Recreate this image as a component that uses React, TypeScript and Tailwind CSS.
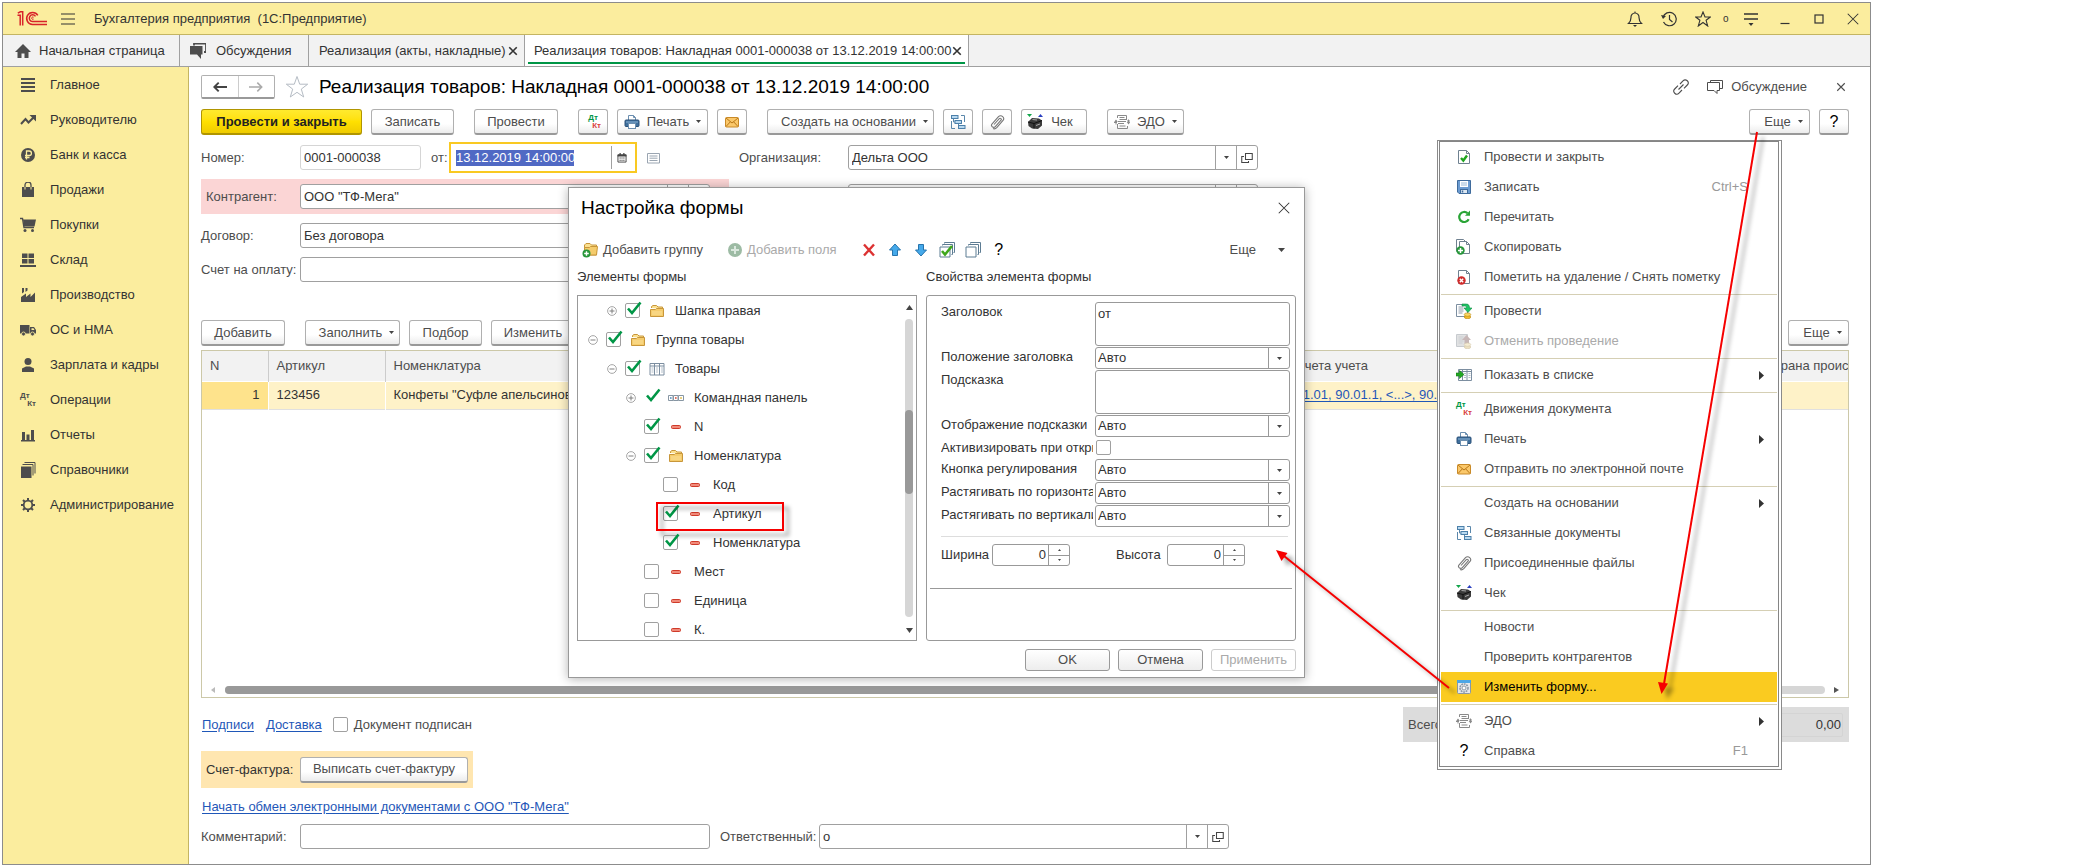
import type { ReactNode } from 'react';
import clsx from 'clsx';

interface IconProps {
  children: ReactNode;
  className?: string;
}

function Icon({ children, className = 'size-4' }: IconProps) {
  return (
    <svg className={clsx('shrink-0', className)} viewBox="0 0 16 16" fill="none" aria-hidden="true">
      {children}
    </svg>
  );
}

function Caret({ className = 'h-[3px] w-[5px]' }: { className?: string }) {
  return (
    <svg className={clsx('shrink-0', className)} viewBox="0 0 5 3" preserveAspectRatio="none" fill="#444" aria-hidden="true">
      <path d="M0 0h5L2.5 3z" />
    </svg>
  );
}

function Logo() {
  return (
    <svg className="h-[15px] w-[30px] shrink-0" viewBox="0 0 30 15" fill="none" stroke="#d8232a" strokeWidth="1.5" aria-hidden="true">
      <path d="M.5 4.2h2.7v10.3M.8 2.2l2.6-1.4h2.3v13.7" />
      <path d="M20.8 4.4A6 6 0 1 0 15.5 13.5H30" />
      <path d="M18.5 5.3A3.4 3.4 0 1 0 15.5 10.6H30" />
      <path d="M16.6 6.2a1.2 1.2 0 1 0 0 1.9" strokeWidth="1" />
    </svg>
  );
}

function DtKt({ mono }: { mono?: boolean }) {
  return (
    <span className="flex h-4 w-4 shrink-0 flex-col justify-center text-[8px] leading-[8px] font-bold">
      <span className={mono ? 'text-[#4d4d4d]' : 'text-[#009646]'}>Дт</span>
      <span className={clsx('self-end', mono ? 'text-[#4d4d4d]' : 'text-[#d9413d]')}>Кт</span>
    </span>
  );
}

const PrinterIcon = () => (
  <Icon>
    <path d="M4.500 6V1.500h5l2 2V6" fill="#fff" stroke="#6c8fb0" />
    <path d="M9.500 1.500v2h2" stroke="#6c8fb0" />
    <rect x="1" y="6" width="14" height="6.500" rx="1" fill="#3f6f9c" stroke="#2b5179" />
    <path d="M2 8h12" stroke="#8db4d6" />
    <rect x="4.500" y="9.500" width="7" height="5" fill="#fff" stroke="#6c8fb0" />
  </Icon>
);

const MailIcon = () => (
  <Icon>
    <rect x="1.500" y="3.500" width="13" height="9.500" rx="1" fill="#fbc86a" stroke="#c98a28" />
    <path d="M2 4l6 5 6-5M2 12.500l4.300-4.600M14 12.500L9.700 7.900" stroke="#b87718" />
  </Icon>
);

const StructureIcon = () => (
  <Icon>
    <path d="M1.500 7v7.500H5M11 1.500h3.500V8" stroke="#5a87ab" />
    <path d="M3.500 5v3H6M8.500 10v3H11" stroke="#5a87ab" />
    <rect x="1.500" y="1.500" width="6.500" height="3" fill="#b9d9f0" stroke="#4c80aa" />
    <rect x="5" y="6.500" width="6.500" height="3" fill="#b9d9f0" stroke="#4c80aa" />
    <rect x="8.500" y="11.500" width="6.500" height="3" fill="#b9d9f0" stroke="#4c80aa" />
  </Icon>
);

const ClipIcon = () => (
  <Icon>
    <path
      d="M5 10.500l5.300-5.800a1.100 1.100 0 0 1 1.700 1.500L6.300 12.600a2.100 2.100 0 0 1-3.200-2.800L9.500 2.700a2.900 2.900 0 0 1 4.300 4L8 13.400c-1.200 1.300-2.600 1.700-4 1.200"
      stroke="#777"
      strokeWidth="1.100"
    />
  </Icon>
);

const RegisterIcon = () => (
  <Icon>
    <path d="M0 0h5L2.500 3z" fill="#12a54a" />
    <path d="M11 3h5l-2.500-3z" fill="#2a3fc0" />
    <path d="M1 8l4-4 7 .5 3 2v5L11 15l-6-.5L1.500 12z" fill="#3b3b3b" />
    <path d="M1 8l6 1.500v5M7 9.500l8-3" stroke="#111" />
    <path d="M5.500 5.500l4.500.5M9 11.500l4-1.500" stroke="#aaa" />
  </Icon>
);

const EdoIcon = () => (
  <Icon>
    <path d="M3.500 4V1.500h9V6M3.500 10v4.500h10V12" stroke="#8a8a8a" />
    <path d="M5.500 3.500h5M5.500 5.500h7M4 7.500h8M4 9.500h6M5.500 12h6" stroke="#8a8a8a" />
    <path d="M0 8.500h3M13 7h3M2 6.500v4M14.500 5.500v3" stroke="#8a8a8a" />
    <path d="M2 5.500L.2 8h3.600zM14.500 10.500L12.700 8h3.600z" fill="#8a8a8a" />
  </Icon>
);

const PageShape = () => (
  <>
    <path d="M2.500 1.500h8l3 3v10h-11z" fill="#fff" stroke="#6f8190" />
    <path d="M10.500 1.500v3h3" stroke="#6f8190" />
  </>
);

const DocCheckIcon = () => (
  <Icon>
    <PageShape />
    <path d="M5 9l2.300 2.500L11 6.500" stroke="#1fa51f" strokeWidth="2.400" />
  </Icon>
);

const FloppyIcon = () => (
  <Icon>
    <path d="M1.500 1.500h13v13H3l-1.500-1.500z" fill="#6b9bd1" stroke="#3f6b9c" />
    <rect x="4" y="2" width="8" height="6" fill="#fff" />
    <path d="M5 4h6M5 6h6" stroke="#9ab8d6" />
    <rect x="4.500" y="10.500" width="7" height="4" fill="#dde8f2" stroke="#3f6b9c" />
    <path d="M6.500 11.500v2" stroke="#3f6b9c" strokeWidth="1.500" />
  </Icon>
);

const ReloadIcon = () => (
  <Icon>
    <path d="M11.500 4.200a5 5 0 1 0 1.200 6" stroke="#2aa436" strokeWidth="2.200" />
    <path d="M9 6.800h5V1.500z" fill="#2aa436" />
  </Icon>
);

const CopyIcon = () => (
  <Icon>
    <path d="M.5.5h7l2 2M.5.500V12.500" stroke="#6f8190" />
    <path d="M3.500 2.500h7l3 3v9h-10z" fill="#fff" stroke="#6f8190" />
    <path d="M10.500 2.500v3h3" stroke="#6f8190" />
    <circle cx="4.500" cy="11.500" r="4.200" fill="#27963a" />
    <path d="M4.500 9v5M2 11.500h5" stroke="#fff" strokeWidth="1.500" />
  </Icon>
);

const MarkDeleteIcon = () => (
  <Icon>
    <PageShape />
    <circle cx="5.500" cy="11.500" r="4.200" fill="#cf2b2b" />
    <path d="M3.800 9.800l3.400 3.400M7.200 9.800l-3.400 3.400" stroke="#fff" strokeWidth="1.400" />
  </Icon>
);

const PostIcon = ({ faded }: { faded?: boolean }) => (
  <Icon className={faded ? 'size-4 opacity-45 grayscale-50' : 'size-4'}>
    <path d="M.5 1.500h11v12H.5z" fill={faded ? '#b9bdc2' : '#fff'} stroke="#7c8ea0" />
    <path d="M2.500 4h5M2.500 6h5M2.500 8h5M2.500 10h4" stroke="#8b99a8" />
    {faded ? (
      <path d="M6 7l4.500-5L15 7h-2v4H8.500V7z" fill="#a05a5a" />
    ) : (
      <path d="M6 1h4c3 0 3.500 2 3.500 4H16l-4 4.500L8 5h2.500c0-1.500-.5-2-2-2H6z" fill="#1fc466" stroke="#128a44" strokeWidth=".6" />
    )}
    <ellipse cx="11.500" cy="14" rx="3.300" ry="1.700" fill="#f3bd2c" stroke="#b98410" strokeWidth=".6" />
    <ellipse cx="11.500" cy="11.600" rx="3.300" ry="1.700" fill="#fbd763" stroke="#b98410" strokeWidth=".6" />
  </Icon>
);

const ShowListIcon = () => (
  <Icon>
    <path d="M2.500 2.500h13v11h-13zM6.500 2.500v11M11 2.500v11M2.500 4.500h13" fill="#fff" stroke="#7c8ea0" />
    <path d="M8 6.500h2M8 8.500h2M8 10.500h2M12.500 6.500h2M12.500 8.500h2M12.500 10.500h2" stroke="#b3bec9" />
    <path d="M0 6h3.500V3.500L8 7.500 3.500 11.500V9H0z" fill="#22a822" stroke="#157915" strokeWidth=".6" />
  </Icon>
);

const EditFormIcon = () => (
  <Icon>
    <rect x="1.500" y="1.500" width="13" height="13" rx="1" fill="#e6e9ec" stroke="#8b98a5" />
    <rect x="1" y="1" width="14" height="3" fill="#4ba6e6" />
    <circle cx="8" cy="9" r="4" stroke="#8b98a5" strokeWidth="1.600" strokeDasharray="1.800 .8" />
    <circle cx="8" cy="9" r="2" fill="#fff" stroke="#8b98a5" />
  </Icon>
);

const FolderIcon = () => (
  <Icon>
    <path d="M2.500 5V3.500L4 2.500h3.500L9 4h4.500v2" fill="#fbe08f" stroke="#c8963a" />
    <path d="M1.500 6.500h5l1-1h7v8h-13z" fill="#f5cc6c" stroke="#c8963a" />
    <path d="M3 9h10M3 11h10" stroke="#fbdf98" />
  </Icon>
);

const ColumnsIcon = () => (
  <Icon>
    <path d="M1 2.500h14v11.500H1zM5.500 2.500v11.500M10.500 2.500v11.500M1 5h14" fill="#fff" stroke="#7c8ea0" />
    <path d="M2.500 7h2M2.500 9h2M2.500 11h2M7 7h2M7 9h2M7 11h2M12 7h2M12 9h2M12 11h2" stroke="#b3bec9" />
  </Icon>
);

const PanelIcon = () => (
  <Icon>
    <path d="M.5 5.500h4.500v5H.5zM5.500 5.500h4.500v5H5.500zM10.500 5.500H15.500v5h-5z" fill="#fff" stroke="#8796a3" />
    <path d="M2 7.200h1.600v1.600H2z" fill="#4a86b8" />
    <path d="M7 7.200h1.600v1.600H7z" fill="#d8452f" />
    <path d="M12.200 7.200h1.600v1.600h-1.600z" fill="#d8b02f" />
  </Icon>
);

const MinusIcon = () => (
  <Icon>
    <rect x="3.500" y="6.500" width="9" height="3" rx="1" fill="#f08a7a" stroke="#cf3a2a" />
  </Icon>
);

const ChatIcon = () => (
  <Icon>
    <path d="M3.500 3V1.500h12v8h-2.500" stroke="#4d4d4d" />
    <path d="M.5 3.500h12v8H10V14.500L7 11.500H.5z" stroke="#4d4d4d" />
  </Icon>
);

const OpenIcon = () => (
  <Icon className="size-3">
    <path d="M6 2h9v8H6zM4 6H1v8h9v-2" stroke="#444" strokeWidth="1.400" />
  </Icon>
);

const CloseIcon = ({ className, weight = 1.2 }: { className?: string; weight?: number }) => (
  <Icon className={className}>
    <path d="M2 2l12 12M14 2L2 14" stroke="currentColor" strokeWidth={weight} />
  </Icon>
);

interface SideItem {
  label: string;
  icon: ReactNode;
}

const dark = '#4d4d4d';

const sections: SideItem[] = [
  { label: 'Главное', icon: <Icon><path d="M1 2h14M1 6h14M1 10h14M1 14h14" stroke={dark} strokeWidth="2" /></Icon> },
  { label: 'Руководителю', icon: <Icon><path d="M1 12l4.500-5 3 3.500L14 5" stroke={dark} strokeWidth="2" /><path d="M9.500 3H16v6.500z" fill={dark} /></Icon> },
  { label: 'Банк и касса', icon: <Icon><circle cx="8" cy="8" r="7" fill={dark} /><path d="M6.500 12.500V4h2.700a2.200 2.200 0 0 1 0 4.500H5M5 10.500h4.500" stroke="#fbed9e" strokeWidth="1.300" /></Icon> },
  { label: 'Продажи', icon: <Icon><path d="M2 5h12v10H2z" fill={dark} /><path d="M5 7V3a3 3 0 0 1 6 0v4" stroke={dark} strokeWidth="1.300" /><path d="M5 5v2.500M11 5v2.500" stroke="#fbed9e" /></Icon> },
  { label: 'Покупки', icon: <Icon><path d="M0 1.500h2.500l1.500 9h10" stroke={dark} strokeWidth="1.400" /><path d="M3 2.500h13l-1.500 7H4z" fill={dark} /><circle cx="5" cy="13.500" r="1.500" fill={dark} /><circle cx="12.500" cy="13.500" r="1.500" fill={dark} /></Icon> },
  { label: 'Склад', icon: <Icon><path d="M2 1.500h5.500V6H2zM8.500 1.500H14V6H8.500zM2 7h5.500v4.500H2zM8.500 7H14v4.500H8.500zM0 13h16v2H0z" fill={dark} /></Icon> },
  { label: 'Производство', icon: <Icon><path d="M1 15V10L6 6.500V10l4.500-3.500V10L15 5.500V15zM2 1h2v4l-2 1.500zM5.500 1h2v2.500l-2 1.500z" fill={dark} /></Icon> },
  { label: 'ОС и НМА', icon: <Icon><path d="M0 3h9.500v8.500H0zM10 5h4l2 3v3.500h-6z" fill={dark} /><circle cx="3.500" cy="12" r="2" fill={dark} stroke="#fbed9e" strokeWidth=".8" /><circle cx="12.500" cy="12" r="2" fill={dark} stroke="#fbed9e" strokeWidth=".8" /><path d="M11.500 6.200h2l1 1.800h-3z" fill="#fbed9e" /></Icon> },
  { label: 'Зарплата и кадры', icon: <Icon><circle cx="8" cy="4.500" r="3.500" fill={dark} /><path d="M2 15v-3.500L6 9.500h4l4 2V15z" fill={dark} /></Icon> },
  { label: 'Операции', icon: <DtKt mono /> },
  { label: 'Отчеты', icon: <Icon><path d="M2 5h3v8H2zM6.500 7.500h3V13h-3zM11 3h3v10h-3zM1 13h14v1.500H1z" fill={dark} /></Icon> },
  { label: 'Справочники', icon: <Icon><path d="M1 4.500h10.500V16H1z" fill={dark} /><path d="M2.500 2.500H13v11M4.500.500H15v11" stroke={dark} /></Icon> },
  { label: 'Администрирование', icon: <Icon><circle cx="8" cy="8" r="4.300" stroke={dark} strokeWidth="1.800" /><path d="M8 1v3M8 12v3M1 8h3M12 8h3M3 3l2 2M11 11l2 2M3 13l2-2M11 5l2-2" stroke={dark} strokeWidth="2" /></Icon> },
];

interface MenuEntry {
  label: string;
  icon?: ReactNode;
  hint?: string;
  submenu?: boolean;
  disabled?: boolean;
  active?: boolean;
}

const menuGroups: MenuEntry[][] = [
  [
    { label: 'Провести и закрыть', icon: <DocCheckIcon /> },
    { label: 'Записать', icon: <FloppyIcon />, hint: 'Ctrl+S' },
    { label: 'Перечитать', icon: <ReloadIcon /> },
    { label: 'Скопировать', icon: <CopyIcon /> },
    { label: 'Пометить на удаление / Снять пометку', icon: <MarkDeleteIcon /> },
  ],
  [
    { label: 'Провести', icon: <PostIcon /> },
    { label: 'Отменить проведение', icon: <PostIcon faded />, disabled: true },
  ],
  [{ label: 'Показать в списке', icon: <ShowListIcon />, submenu: true }],
  [
    { label: 'Движения документа', icon: <DtKt /> },
    { label: 'Печать', icon: <PrinterIcon />, submenu: true },
    { label: 'Отправить по электронной почте', icon: <MailIcon /> },
  ],
  [
    { label: 'Создать на основании', submenu: true },
    { label: 'Связанные документы', icon: <StructureIcon /> },
    { label: 'Присоединенные файлы', icon: <ClipIcon /> },
    { label: 'Чек', icon: <RegisterIcon /> },
  ],
  [
    { label: 'Новости' },
    { label: 'Проверить контрагентов' },
    { label: 'Изменить форму...', icon: <EditFormIcon />, active: true },
  ],
  [
    { label: 'ЭДО', icon: <EdoIcon />, submenu: true },
    { label: 'Справка', icon: <span className="w-4 text-center text-base text-black">?</span>, hint: 'F1' },
  ],
];

interface TreeRow {
  label: string;
  level: number;
  icon: ReactNode;
  checked?: boolean;
  plain?: boolean;
  expander?: 'plus' | 'minus';
  marked?: boolean;
}

const tree: TreeRow[] = [
  { label: 'Шапка правая', level: 1, icon: <FolderIcon />, checked: true, expander: 'plus' },
  { label: 'Группа товары', level: 0, icon: <FolderIcon />, checked: true, expander: 'minus' },
  { label: 'Товары', level: 1, icon: <ColumnsIcon />, checked: true, expander: 'minus' },
  { label: 'Командная панель', level: 2, icon: <PanelIcon />, checked: true, plain: true, expander: 'plus' },
  { label: 'N', level: 2, icon: <MinusIcon />, checked: true },
  { label: 'Номенклатура', level: 2, icon: <FolderIcon />, checked: true, expander: 'minus' },
  { label: 'Код', level: 3, icon: <MinusIcon /> },
  { label: 'Артикул', level: 3, icon: <MinusIcon />, checked: true, marked: true },
  { label: 'Номенклатура', level: 3, icon: <MinusIcon />, checked: true },
  { label: 'Мест', level: 2, icon: <MinusIcon /> },
  { label: 'Единица', level: 2, icon: <MinusIcon /> },
  { label: 'К.', level: 2, icon: <MinusIcon /> },
];

const levelPadding = ['pl-[10px]', 'pl-[29px]', 'pl-12', 'pl-[67px]'];

interface ToolButtonProps {
  children: ReactNode;
  className?: string;
  label?: string;
}

function ToolButton({ children, className, label }: ToolButtonProps) {
  return (
    <button
      type="button"
      aria-label={label}
      className={clsx(
        'flex h-[26px] shrink-0 items-center justify-center rounded-[3px] border border-[#b0b0b0] border-b-2 border-b-[#999] bg-linear-to-b from-white from-60% to-[#ececec] text-[#4d4d4d]',
        className,
      )}
    >
      {children}
    </button>
  );
}

interface FieldProps {
  id: string;
  value?: string;
  pickers?: boolean;
  className?: string;
}

function Field({ id, value = '', pickers, className }: FieldProps) {
  return (
    <div className={clsx('flex h-[25px] shrink-0 rounded-[3px] border border-[#a0a0a0] bg-white', className)}>
      <input id={id} defaultValue={value} className="min-w-0 flex-1 bg-transparent px-[3px] text-[#333] outline-none" />
      {pickers && (
        <>
          <button type="button" aria-label="Выбрать" className="flex w-[21px] items-center justify-center border-l border-[#a0a0a0]">
            <Caret />
          </button>
          <button type="button" aria-label="Открыть" className="flex w-[21px] items-center justify-center border-l border-[#a0a0a0]">
            <OpenIcon />
          </button>
        </>
      )}
    </div>
  );
}

function CheckMark() {
  return (
    <svg className="pointer-events-none absolute -top-[2px] left-[2px] h-4 w-[15px]" viewBox="0 0 15 16" fill="none" aria-hidden="true">
      <path d="M1 7.500l4 4.500L13.500 1.500" stroke="#009646" strokeWidth="2.600" />
    </svg>
  );
}

function TitleBar() {
  return (
    <header className="flex h-8 shrink-0 items-center border-b border-[#c4b562] bg-[#fbed9e] pl-[14px] text-[#333]">
      <Logo />
      <button type="button" aria-label="Меню" className="ml-[13px]">
        <Icon><path d="M1 3h14M1 8h14M1 13h14" stroke="#333" strokeWidth="1.200" /></Icon>
      </button>
      <h1 className="ml-[18px] flex-1 whitespace-pre">Бухгалтерия предприятия  (1С:Предприятие)</h1>
      <div className="flex items-center pr-[9px]">
        <button type="button" aria-label="Уведомления">
          <Icon><path d="M1.500 12.500h13c-2-2-2.500-3-2.500-6A4 4 0 0 0 8 2a4 4 0 0 0-4 4.500c0 3-.5 4-2.500 6z" stroke="#333" strokeWidth="1.200" /><path d="M8 .5V2" stroke="#333" /><path d="M6 14h4l-2 2z" fill="#333" /></Icon>
        </button>
        <button type="button" aria-label="История" className="ml-[18px]">
          <Icon><path d="M2 6.500a6.700 6.700 0 1 1 .5 4.500M8.500 4v4.500l3 2.500" stroke="#333" strokeWidth="1.200" /><path d="M0 4l2 4 3-3z" fill="#333" /></Icon>
        </button>
        <button type="button" aria-label="Избранное" className="ml-[18px]">
          <Icon><path d="M8 1l2 5h5.300l-4.200 3.300L12.700 15 8 11.500 3.300 15l1.600-5.700L.7 6H6z" stroke="#333" strokeWidth="1.100" /></Icon>
        </button>
        <span className="ml-3 w-2 text-[10px]">o</span>
        <button type="button" aria-label="Настройки" className="ml-3">
          <Icon><path d="M1 3h14M1 8h14" stroke="#333" strokeWidth="1.300" /><path d="M5.500 12h5L8 15z" fill="#333" /></Icon>
        </button>
        <button type="button" aria-label="Свернуть" className="ml-[18px]">
          <Icon><path d="M3.500 12.500h9" stroke="#333" strokeWidth="1.200" /></Icon>
        </button>
        <button type="button" aria-label="Развернуть" className="ml-[18px]">
          <Icon><rect x="4" y="4" width="8" height="8" stroke="#333" strokeWidth="1.200" /></Icon>
        </button>
        <button type="button" aria-label="Закрыть" className="ml-[18px]">
          <CloseIcon className="size-4 p-px" />
        </button>
      </div>
    </header>
  );
}

function Tabs() {
  const tab = 'flex h-full shrink-0 items-center border-r border-[#a0a0a0] whitespace-nowrap';
  return (
    <nav className="flex h-8 shrink-0 border-b border-[#a0a0a0] bg-[#f2f2f2] text-[#333]">
      <button type="button" className={clsx(tab, 'w-[177px] pl-3')}>
        <Icon><path d="M8 1L0 9h2.500v6h4v-4.500h3V15h4V9H16z" fill={dark} /></Icon>
        <span className="ml-2">Начальная страница</span>
      </button>
      <button type="button" className={clsx(tab, 'w-[129px] pl-[10px]')}>
        <Icon><path d="M4 2.500V.5h12v8.500h-2" stroke={dark} strokeWidth="1.800" /><path d="M0 3h12.500v8.500H11V16l-4-4.500H0z" fill={dark} /></Icon>
        <span className="ml-[10px]">Обсуждения</span>
      </button>
      <button type="button" className={clsx(tab, 'w-[216px] justify-between pr-[6px] pl-[10px]')}>
        Реализация (акты, накладные)
        <CloseIcon className="size-[10px]" weight={2.6} />
      </button>
      <button type="button" className={clsx(tab, 'relative w-[444px] justify-between bg-white pr-[6px] pl-[9px]')}>
        Реализация товаров: Накладная 0001-000038 от 13.12.2019 14:00:00
        <CloseIcon className="size-[10px]" weight={2.6} />
        <span className="absolute right-[3px] bottom-[2px] left-[3px] h-[2px] bg-[#009646]" />
      </button>
    </nav>
  );
}

function Sidebar() {
  return (
    <aside className="w-[186px] shrink-0 border-r border-[#c4b562] bg-[#fbed9e] text-[#333]">
      <ul>
        {sections.map((item) => (
          <li key={item.label}>
            <button type="button" className="flex h-[35px] w-full items-center pl-[17px] text-left">
              {item.icon}
              <span className="ml-[14px]">{item.label}</span>
            </button>
          </li>
        ))}
      </ul>
    </aside>
  );
}

function Toolbar() {
  return (
    <div className="mt-[10px] flex items-center text-[#4d4d4d]">
      <button
        type="button"
        className="h-[26px] w-[161px] rounded-[3px] border border-[#b09500] border-b-2 bg-linear-to-b from-[#ffea2e] via-[#ffe000] to-[#efcb00] font-bold text-[#222]"
      >
        Провести и закрыть
      </button>
      <ToolButton className="ml-[9px] w-[83px]">Записать</ToolButton>
      <ToolButton className="ml-5 w-[84px]">Провести</ToolButton>
      <ToolButton className="ml-5 w-[30px]" label="Движения документа"><DtKt /></ToolButton>
      <ToolButton className="ml-[9px] w-[91px]">
        <PrinterIcon />
        <span className="mx-[7px]">Печать</span>
        <Caret />
      </ToolButton>
      <ToolButton className="ml-[9px] w-[30px]" label="Отправить по почте"><MailIcon /></ToolButton>
      <ToolButton className="ml-5 w-[167px] pl-2">
        <span className="mr-[7px]">Создать на основании</span>
        <Caret />
      </ToolButton>
      <ToolButton className="ml-[9px] w-[30px]" label="Связанные документы"><StructureIcon /></ToolButton>
      <ToolButton className="ml-[9px] w-[30px]" label="Файлы"><ClipIcon /></ToolButton>
      <ToolButton className="ml-[9px] w-[66px] pr-2">
        <RegisterIcon />
        <span className="ml-2">Чек</span>
      </ToolButton>
      <ToolButton className="ml-5 w-[77px]">
        <EdoIcon />
        <span className="mx-[7px]">ЭДО</span>
        <Caret />
      </ToolButton>
      <ToolButton className="ml-auto w-[61px] pl-2">
        <span className="mr-[7px]">Еще</span>
        <Caret />
      </ToolButton>
      <ToolButton className="ml-[9px] w-[30px]" label="Справка"><span className="text-base text-black">?</span></ToolButton>
    </div>
  );
}

function DocumentHeader() {
  return (
    <div className="flex h-6 items-center">
      <div className="flex h-6 w-[74px] rounded-[2px] border border-[#b0b0b0] border-b-2 border-b-[#999]">
        <button type="button" aria-label="Назад" className="flex flex-1 items-center justify-center border-r border-[#ccc]">
          <Icon className="size-[14px]"><path d="M1 8h15M6.500 3L1.500 8l5 5" stroke="#444" strokeWidth="2.200" /></Icon>
        </button>
        <button type="button" aria-label="Вперед" className="flex flex-1 items-center justify-center">
          <Icon className="size-[14px]"><path d="M0 8h15M9.500 3l5 5-5 5" stroke="#aaa" strokeWidth="1.800" /></Icon>
        </button>
      </div>
      <button type="button" aria-label="В избранное" className="ml-[10px]">
        <svg className="size-6" viewBox="0 0 24 24" fill="none" stroke="#b5bcc4" aria-hidden="true">
          <path d="M12 1.500l2.700 7.700h8l-6.400 4.900 2.400 7.900L12 17.300 5.300 22l2.400-7.900L1.300 9.200h8z" />
        </svg>
      </button>
      <h2 className="ml-[10px] text-[19px] leading-6 whitespace-nowrap text-black">
        Реализация товаров: Накладная 0001-000038 от 13.12.2019 14:00:00
      </h2>
      <div className="ml-auto flex items-center text-[#4d4d4d]">
        <button type="button" aria-label="Получить ссылку">
          <Icon><path d="M7 5l3-3.200a3 3 0 0 1 4.300 4.200L11 9.300M9 11l-3 3.200A3 3 0 0 1 1.700 10L5 6.700M5.500 10.500l5-5" stroke="#4d4d4d" strokeWidth="1.100" /></Icon>
        </button>
        <button type="button" className="ml-[18px] flex items-center">
          <ChatIcon />
          <span className="ml-2">Обсуждение</span>
        </button>
        <button type="button" aria-label="Закрыть" className="mr-[3px] ml-[29px]">
          <CloseIcon className="size-[10px]" weight={1.8} />
        </button>
      </div>
    </div>
  );
}

function DocumentFields() {
  return (
    <div className="text-[#4d4d4d]">
      <div className="mt-[7px] flex h-[31px] items-center">
        <div className="flex w-[538px] items-center">
          <label htmlFor="number" className="w-[99px]">Номер:</label>
          <Field id="number" value="0001-000038" className="w-[121px] border-[#d5d5d5]!" />
          <label htmlFor="date" className="ml-[10px] w-[18px]">от:</label>
          <div className="flex h-[31px] w-[188px] items-center border-2 border-[#f9c922] bg-white pl-[5px]">
            <input id="date" defaultValue="13.12.2019 14:00:00" className="h-4 w-[118px] bg-[#5069c4] text-white outline-none" />
            <button type="button" aria-label="Календарь" className="ml-auto flex h-[23px] w-6 items-center justify-center border-l border-[#a0a0a0] pr-1">
              <Icon className="size-[10px]"><path d="M1.500 3h13v11.500h-13z" stroke="#444" strokeWidth="1.500" /><path d="M1 2.500h14v3H1zM4 0h2v3H4zM10 0h2v3h-2z" fill="#444" /><path d="M4 8h8M4 11.500h8" stroke="#444" strokeWidth="1.800" strokeDasharray="2 1" /></Icon>
            </button>
          </div>
          <Icon className="ml-2 size-4"><path d="M2.500 3.500h12v9.500h-12z" fill="#fff" stroke="#9aa5b1" /><path d="M4.500 6h8M4.500 8.200h8M4.500 10.500h8" stroke="#9aa5b1" /></Icon>
        </div>
        <label htmlFor="organization" className="w-[109px]">Организация:</label>
        <Field id="organization" value="Дельта ООО" pickers className="w-[410px]" />
      </div>
      <div className="mt-[6px] flex h-[35px] items-center">
        <div className="flex h-full w-[528px] items-center bg-[#fbd5d5] pl-[5px]">
          <label htmlFor="contractor" className="w-[94px]">Контрагент:</label>
          <Field id="contractor" value={'ООО "ТФ-Мега"'} pickers className="w-[410px]" />
        </div>
        <label htmlFor="warehouse" className="ml-[10px] w-[109px]">Склад:</label>
        <Field id="warehouse" pickers className="w-[410px]" />
      </div>
      <div className="mt-[9px] flex items-center">
        <label htmlFor="contract" className="w-[99px]">Договор:</label>
        <Field id="contract" value="Без договора" pickers className="w-[410px]" />
      </div>
      <div className="mt-[9px] flex items-center">
        <label htmlFor="invoice" className="w-[99px] whitespace-nowrap">Счет на оплату:</label>
        <Field id="invoice" pickers className="w-[410px]" />
      </div>
    </div>
  );
}

function GoodsTable() {
  const head = 'h-[30px] border-r border-[#ccc] bg-[#f2f2f2] px-2 text-left font-normal overflow-hidden';
  return (
    <div className="mt-1 flex min-h-[340px] flex-1 flex-col justify-between border border-[#ccc8a8]">
      <table className="w-full table-fixed border-collapse whitespace-nowrap text-[#4d4d4d]">
        <colgroup>
          <col className="w-[66px]" />
          <col className="w-[117px]" />
          <col />
          <col className="w-[470px]" />
          <col className="w-[91px]" />
        </colgroup>
        <thead>
          <tr className="border-b border-[#ccc]">
            <th className={head}>N</th>
            <th className={head}>Артикул</th>
            <th className={head}>Номенклатура</th>
            <th className={head}>Счета учета</th>
            <th className="overflow-hidden bg-[#f2f2f2] pl-2 text-left font-normal">Страна происхождения</th>
          </tr>
        </thead>
        <tbody>
          <tr className="border-b border-[#e0e0e0] bg-[#fef2c8] text-[#333]">
            <td className="h-7 border-t border-r border-white bg-[#fee38c] px-2 text-right">1</td>
            <td className="border-t border-r border-white px-2">123456</td>
            <td className="overflow-hidden border-t border-r border-white px-2">Конфеты "Суфле апельсиновое"</td>
            <td className="overflow-hidden border-t border-white px-2">
              <a href="#accounts" className="text-[#1f57b8] underline underline-offset-2">{'41.01, 90.01.1, <...>, 90.02.1, 90.03'}</a>
            </td>
            <td className="border-t border-white" />
          </tr>
        </tbody>
      </table>
      <div className="flex h-[11px] items-start px-[9px]">
        <svg className="h-2 w-1" viewBox="0 0 4 8" fill="#bbb" aria-hidden="true"><path d="M4 1v6L0 4z" /></svg>
        <div className="mr-[9px] ml-[10px] h-2 flex-1 rounded-full bg-[#d6d6d6]">
          <div className="h-2 w-[94%] rounded-full bg-[#999]" />
        </div>
        <svg className="h-2 w-[5px]" viewBox="0 0 5 8" fill="#555" aria-hidden="true"><path d="M0 1v6l5-3z" /></svg>
      </div>
    </div>
  );
}

function DocumentFooter() {
  return (
    <div className="text-[#4d4d4d]">
      <div className="mt-[9px] flex h-[35px] items-center">
        <a href="#signatures" className="ml-px text-[#1f57b8] underline underline-offset-2">Подписи</a>
        <a href="#delivery" className="ml-3 text-[#1f57b8] underline underline-offset-2">Доставка</a>
        <input id="signed" type="checkbox" className="ml-[11px] size-[15px] appearance-none rounded-[2px] border border-[#a0a0a0]" />
        <label htmlFor="signed" className="ml-[6px]">Документ подписан</label>
        <div className="ml-auto flex h-[35px] w-[446px] items-center justify-between bg-[#dcdcdc] pr-[6px] pl-[5px]">
          <label htmlFor="total">Всего:</label>
          <output id="total" className="flex h-6 w-[120px] items-center justify-end rounded-[2px] border border-[#d4d4d4] pr-px text-[#333]">0,00</output>
        </div>
      </div>
      <div className="mt-[9px] flex h-[37px] w-[272px] items-center bg-[#ffe6b0] pl-[5px]">
        <span className="w-[94px] text-[#333]">Счет-фактура:</span>
        <ToolButton className="w-[168px]">Выписать счет-фактуру</ToolButton>
      </div>
      <div className="mt-2 flex h-[22px] items-center">
        <a href="#exchange" className="ml-px text-[#1f57b8] underline underline-offset-2">Начать обмен электронными документами с ООО "ТФ-Мега"</a>
      </div>
      <div className="mt-[6px] mb-[15px] flex items-center">
        <label htmlFor="comment" className="w-[99px]">Комментарий:</label>
        <Field id="comment" className="w-[410px]" />
        <label htmlFor="responsible" className="ml-[10px] w-[99px]">Ответственный:</label>
        <Field id="responsible" value="о" pickers className="w-[410px]" />
      </div>
    </div>
  );
}

function MoreMenu() {
  return (
    <div className="absolute top-[137px] right-[88px] w-[345px] border border-[#8a8a8a] bg-white pr-[2px] pb-[2px] pl-px">
      <div className="border border-[#858585] px-px">
        {menuGroups.map((group, index) => (
          <div key={group[0].label}>
            {index > 0 && <div className="h-1 pt-[2px]"><div className="h-px bg-[#d5cfb4]" /></div>}
            {group.map((entry) => (
              <button
                type="button"
                key={entry.label}
                disabled={entry.disabled}
                className={clsx(
                  'flex h-[30px] w-full items-center pr-[13px] pl-[15px] text-left',
                  entry.active && 'bg-[#facb20] text-black',
                  entry.disabled && 'text-[#aaa]',
                  !entry.active && !entry.disabled && 'text-[#4d4d4d]',
                )}
              >
                <span className="flex w-7 shrink-0">{entry.icon}</span>
                <span className="flex-1 whitespace-nowrap">{entry.label}</span>
                {entry.hint && <span className="pr-4 text-[#999]">{entry.hint}</span>}
                {entry.submenu && (
                  <svg className="h-[9px] w-[5px]" viewBox="0 0 5 9" fill="#333" aria-hidden="true"><path d="M0 0v9l5-4.500z" /></svg>
                )}
              </button>
            ))}
          </div>
        ))}
      </div>
    </div>
  );
}

function ElementTree() {
  return (
    <div className="flex h-[346px] w-[340px] shrink-0 overflow-hidden border border-[#999]">
      <ul className="flex-1">
        {tree.map((row, index) => (
          <li key={index} className={clsx('relative flex h-[29px] items-center', levelPadding[row.level])}>
            <button type="button" aria-label="Развернуть" className={clsx('flex w-[10px]', !row.expander && 'invisible')}>
              <Icon className="size-[10px]">
                <circle cx="8" cy="8" r="7" stroke="#999" strokeWidth="1.400" />
                <path d={row.expander === 'plus' ? 'M4 8h8M8 4v8' : 'M4 8h8'} stroke="#777" strokeWidth="1.500" />
              </Icon>
            </button>
            <label className="flex items-center">
              <span className="relative ml-2 flex size-[15px]">
                <input
                  type="checkbox"
                  defaultChecked={row.checked}
                  className={clsx('size-[15px] appearance-none rounded-[2px]', !row.plain && 'border border-[#a0a0a0]')}
                />
                {row.checked && <CheckMark />}
              </span>
              <span className="ml-[9px]">{row.icon}</span>
              <span className="ml-[10px]">{row.label}</span>
            </label>
            {row.marked && (
              <span className="pointer-events-none absolute top-[3px] left-[78px] h-[29px] w-32 border-2 border-[#f60000] drop-shadow-[5px_5px_2px_rgba(0,0,0,0.4)]" />
            )}
          </li>
        ))}
      </ul>
      <div className="mr-[3px] flex w-2 flex-col items-center pt-[9px]">
        <svg className="h-[5px] w-[7px]" viewBox="0 0 7 5" fill="#444" aria-hidden="true"><path d="M0 5h7L3.500 0z" /></svg>
        <div className="mt-[9px] h-[298px] w-2 rounded-full bg-[#d6d6d6] pt-[91px]">
          <div className="h-[84px] w-2 rounded-full bg-[#999]" />
        </div>
        <svg className="mt-[11px] h-[5px] w-[7px]" viewBox="0 0 7 5" fill="#444" aria-hidden="true"><path d="M0 0h7L3.500 5z" /></svg>
      </div>
    </div>
  );
}

interface PropertyRowProps {
  id: string;
  label: string;
  kind: 'text' | 'select' | 'check';
  value?: string;
}

function PropertyRow({ id, label, kind, value = '' }: PropertyRowProps) {
  return (
    <div className="flex">
      <label htmlFor={id} className="mr-[2px] h-5 w-[152px] shrink-0 overflow-hidden leading-5 whitespace-nowrap">{label}</label>
      {kind === 'text' && (
        <textarea id={id} defaultValue={value} className="h-11 w-[195px] resize-none rounded-[3px] border border-[#999] px-[2px] pt-[3px] leading-4 outline-none" />
      )}
      {kind === 'select' && (
        <div className="flex h-[22px] w-[195px] rounded-[3px] border border-[#999]">
          <select id={id} className="flex-1 appearance-none bg-transparent px-[2px] outline-none">
            <option>Авто</option>
            <option>Да</option>
            <option>Нет</option>
          </select>
          <span className="flex w-[21px] items-center justify-center border-l border-[#999]"><Caret /></span>
        </div>
      )}
      {kind === 'check' && (
        <input id={id} type="checkbox" className="mt-[2px] mb-[3px] ml-px size-[15px] appearance-none rounded-[2px] border border-[#a0a0a0]" />
      )}
    </div>
  );
}

function SizeField({ id, label }: { id: string; label: string }) {
  return (
    <div className="flex h-[22px] items-center">
      <label htmlFor={id} className="w-[51px]">{label}</label>
      <div className="flex h-[22px] w-[78px] rounded-[3px] border border-[#999]">
        <input id={id} defaultValue="0" className="w-[55px] bg-transparent pr-[2px] text-right outline-none" />
        <div className="flex flex-1 flex-col border-l border-[#999]">
          <button type="button" aria-label="Больше" className="flex flex-1 items-center justify-center border-b border-[#999]">
            <Caret className="h-[2px] w-[3px] rotate-180" />
          </button>
          <button type="button" aria-label="Меньше" className="flex flex-1 items-center justify-center">
            <Caret className="h-[2px] w-[3px]" />
          </button>
        </div>
      </div>
    </div>
  );
}

function FormSettingsDialog() {
  const dialogButton = 'h-[22px] w-[85px] rounded-[3px] border border-[#999] bg-linear-to-b from-white to-[#ededed]';
  return (
    <section
      role="dialog"
      aria-label="Настройка формы"
      className="absolute top-[184px] left-[565px] w-[737px] border border-[#999] bg-white px-2 pb-[6px] text-[#333] shadow-[0_1px_10px_rgba(0,0,0,0.3)]"
    >
      <div className="flex h-[42px] items-center justify-between pr-[5px] pb-[2px] pl-1">
        <h2 className="text-[19px] leading-6 text-black">Настройка формы</h2>
        <button type="button" aria-label="Закрыть"><CloseIcon className="size-[14px]" /></button>
      </div>
      <div className="flex h-[39px] items-center pl-[5px]">
        <button type="button" className="flex items-center text-[#4d4d4d]">
          <Icon><path d="M2.500 5V3L4 1.500h4L9.500 3h5v10h-12z" fill="#fbe08f" stroke="#c8963a" /><path d="M2.500 5.500h5l1-1h7l-1 8.500h-12z" fill="#f5cc6c" stroke="#c8963a" /><circle cx="4.500" cy="11.500" r="4" fill="#27963a" /><path d="M4.500 9.200v4.600M2.200 11.500h4.600" stroke="#fff" strokeWidth="1.400" /></Icon>
          <span className="ml-[5px]">Добавить группу</span>
        </button>
        <button type="button" disabled className="ml-6 flex items-center text-[#aaa]">
          <Icon><circle cx="8" cy="8" r="7" fill="#9dbba4" /><path d="M8 4v8M4 8h8" stroke="#dbe8de" strokeWidth="2" /></Icon>
          <span className="ml-1">Добавить поля</span>
        </button>
        <button type="button" aria-label="Удалить" className="ml-6">
          <Icon><path d="M3 2.500l10 11M13 2.500L3 13.500" stroke="#dc3232" strokeWidth="2.400" /></Icon>
        </button>
        <button type="button" aria-label="Вверх" className="ml-[10px]">
          <Icon><path d="M8 2l5.500 6H10.500v5.500h-5V8H2.500z" fill="#45a9ea" stroke="#2774ad" /></Icon>
        </button>
        <button type="button" aria-label="Вниз" className="ml-[10px]">
          <Icon><path d="M8 14l5.500-6H10.500V2.500h-5V8H2.500z" fill="#45a9ea" stroke="#2774ad" /></Icon>
        </button>
        <button type="button" aria-label="Установить флажки" className="ml-[10px]">
          <Icon><path d="M3.500 3.500v-1h10v10h-1M5.500 1.500v-1h10v10h-1" stroke="#5d7c93" /><path d="M1 5h10v10H1z" fill="#fff" stroke="#5d7c93" /><path d="M3 9l3 3.500L13 4" stroke="#3fa71c" strokeWidth="2.600" /></Icon>
        </button>
        <button type="button" aria-label="Снять флажки" className="ml-[10px]">
          <Icon><path d="M3.500 3.500v-1h10v10h-1M5.500 1.500v-1h10v10h-1" stroke="#5d7c93" /><path d="M1 5h10v10H1z" fill="#fff" stroke="#5d7c93" /></Icon>
        </button>
        <button type="button" aria-label="Справка" className="ml-[10px] w-4 text-base text-black">?</button>
        <button type="button" className="mr-[11px] ml-auto flex items-center text-[#4d4d4d]">
          Еще
          <Caret className="ml-[22px] h-1 w-[7px]" />
        </button>
      </div>
      <div className="flex gap-[9px]">
        <div>
          <h3 className="mb-[10px] leading-4">Элементы формы</h3>
          <ElementTree />
        </div>
        <div className="flex-1">
          <h3 className="mb-[10px] leading-4">Свойства элемента формы</h3>
          <div className="h-[346px] rounded-[3px] border border-[#999]">
            <div className="flex flex-col gap-px pt-[6px] pl-[14px]">
              <PropertyRow id="caption" label="Заголовок" kind="text" value="от" />
              <PropertyRow id="caption-position" label="Положение заголовка" kind="select" />
              <PropertyRow id="hint" label="Подсказка" kind="text" />
              <PropertyRow id="hint-display" label="Отображение подсказки" kind="select" />
              <PropertyRow id="activate" label="Активизировать при открытии" kind="check" />
              <PropertyRow id="spin" label="Кнопка регулирования" kind="select" />
              <PropertyRow id="stretch-x" label="Растягивать по горизонтали" kind="select" />
              <PropertyRow id="stretch-y" label="Растягивать по вертикали" kind="select" />
            </div>
            <div className="mt-[9px] mr-[7px] ml-[14px] h-px bg-[#ddd]" />
            <div className="mt-[7px] flex gap-[46px] pl-[14px]">
              <SizeField id="width" label="Ширина" />
              <SizeField id="height" label="Высота" />
            </div>
            <div className="mx-[3px] mt-[22px] h-px bg-[#999]" />
          </div>
        </div>
      </div>
      <div className="mt-2 flex justify-end gap-2 text-[#4d4d4d]">
        <button type="button" className={dialogButton}>OK</button>
        <button type="button" className={dialogButton}>Отмена</button>
        <button type="button" disabled className="h-[22px] w-[85px] rounded-[3px] border border-[#ccc] text-[#aaa]">Применить</button>
      </div>
    </section>
  );
}

// Red callout arrows: "Еще" -> "Изменить форму..." -> settings dialog
function Callouts() {
  return (
    <svg
      className="pointer-events-none absolute top-[117px] right-[80px] h-[600px] w-[530px] drop-shadow-[6px_5px_2px_rgba(0,0,0,0.35)]"
      viewBox="1260 120 530 600"
      aria-hidden="true"
    >
      <path d="M1757 132L1664 684" stroke="#f60000" strokeWidth="2" />
      <path d="M1661.500 694l-3.500-12 10 1.600z" fill="#f60000" />
      <path d="M1449 688L1284 556" stroke="#f60000" strokeWidth="2" />
      <path d="M1276 550l11.500 3-6 8z" fill="#f60000" />
    </svg>
  );
}

export default function App() {
  return (
    <div className="flex min-h-screen bg-white pt-[2px] pr-[211px] pl-[2px] font-['Liberation_Sans',Arial,sans-serif] text-[13px] leading-4">
      <div className="relative flex min-w-0 flex-1 flex-col border border-[#8c8c8c]">
        <TitleBar />
        <Tabs />
        <div className="flex flex-1">
          <Sidebar />
          <main className="flex min-w-0 flex-1 flex-col pt-2 pr-[21px] pl-3">
            <DocumentHeader />
            <Toolbar />
            <DocumentFields />
            <div className="mt-[38px] flex">
              <ToolButton className="w-[84px]">Добавить</ToolButton>
              <ToolButton className="ml-5 w-[95px] pl-2">
                <span className="mr-[7px]">Заполнить</span>
                <Caret />
              </ToolButton>
              <ToolButton className="ml-[9px] w-[73px]">Подбор</ToolButton>
              <ToolButton className="ml-[9px] w-[84px]">Изменить</ToolButton>
              <ToolButton className="ml-auto w-[61px] pl-2">
                <span className="mr-[7px]">Еще</span>
                <Caret />
              </ToolButton>
            </div>
            <GoodsTable />
            <DocumentFooter />
          </main>
        </div>
        <FormSettingsDialog />
        <MoreMenu />
        <Callouts />
      </div>
    </div>
  );
}
